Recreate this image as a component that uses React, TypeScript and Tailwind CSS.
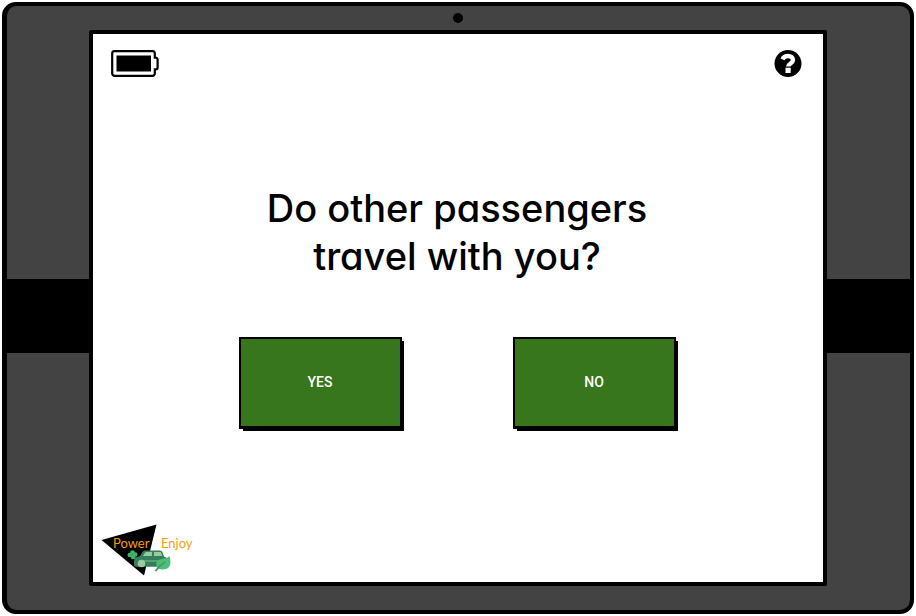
import React from "react";

function BatteryIcon() {
  return (
    <svg width="48" height="27" viewBox="0 0 48 27" role="img" aria-label="Battery full">
      <path
        d="M3.5 1.2h38a2.3 2.3 0 0 1 2.3 2.3v4.2h1a1.8 1.8 0 0 1 1.8 1.8v8a1.8 1.8 0 0 1-1.8 1.8h-1v4.2a2.3 2.3 0 0 1-2.3 2.3h-38a2.3 2.3 0 0 1-2.3-2.3v-20a2.3 2.3 0 0 1 2.3-2.3Z"
        fill="white"
        stroke="black"
        strokeWidth="2.2"
      />
      <path d="M5.500 5.500H40V21.500H5.500Z" fill="black" />
    </svg>
  );
}

function HelpIcon() {
  return (
    <svg width="28" height="28" viewBox="0 0 28 28" aria-hidden="true">
      <circle cx="14" cy="13.5" r="13.5" fill="black" />
      <path
        d="M8.500 9.300C9.500 7 11.200 6 14 6c2.800 0 5 1.600 5 4 0 3.200-4.800 3.600-4.800 6.500"
        fill="none"
        stroke="white"
        strokeWidth="4.400"
      />
      <path d="M11.500 17.700h5.200V23h-5.200Z" fill="white" />
    </svg>
  );
}

function Logo() {
  return (
    <svg width="94" height="52" viewBox="0 0 94 52" role="img" aria-label="Power Enjoy">
      <path d="M.5 16 55.500.5 43 51.500Z" fill="black" />
      <g fontSize="13" className="fill-[#f59e0b] font-['Lato',sans-serif]">
        <text x="12" y="24">Power</text>
        <text x="60" y="24">Enjoy</text>
      </g>
      <g fill="#3fb56c">
        <circle cx="31.500" cy="28.500" r="2.300" />
        <circle cx="28.800" cy="31" r="2.300" />
        <circle cx="34.200" cy="30.500" r="2.300" />
        <circle cx="32" cy="33" r="2.300" />
        <path d="M32 31l4.500 4.500-1 1-4.500-4Z" />
      </g>
      <path
        d="M33 40.500V37q0-3.500 4-4.200l2-.8 2.500-4q.8-1.500 2.500-1.500h15q2 0 2.400 1.500l1.600 4.500q4 1 4 5v5.200H35q-2 0-2-2.200Z"
        fill="#357f5e"
      />
      <path d="M42 32l2-3.200q.4-.8 1.500-.8H51v4Zm11-4h6q1 0 1.200.8l1 3.200H53Z" fill="#9acb9f" />
      <path d="M43 36h17v2H43Z" fill="#57a373" />
      <circle cx="40.500" cy="39.500" r="3.800" fill="#9acb9f" />
      <path d="M57.500 45c-4-5-2-9 3-10 4-1 6-1 8-3 2.500 9 .5 15-11 13Z" fill="#4cbf76" />
      <path d="M54.500 47Q58 42 64 38" stroke="#3f9d68" strokeWidth="1.800" fill="none" />
    </svg>
  );
}

function SidePanel({ className }: { className: string }) {
  return (
    <div className={`flex shrink-0 flex-col justify-center pt-4 ${className}`}>
      <div className="h-[74px] bg-black" />
    </div>
  );
}

function AnswerButton({ children }: { children: React.ReactNode }) {
  return (
    <button
      type="button"
      className="h-[92px] w-[163px] border-2 border-b-3 border-black bg-[#38761d] font-['Roboto',sans-serif] text-sm font-medium text-white shadow-[3px_3px_0_-1px_#000]"
    >
      {children}
    </button>
  );
}

export default function App() {
  return (
    <div className="flex min-h-screen bg-white p-0.5">
      <div className="flex grow flex-col rounded-[14px] border-4 border-l-5 border-black bg-[#434343]">
        <div className="flex h-6 items-center justify-center pr-0.5">
          <div className="size-[10px] rounded-full bg-black" />
        </div>
        <div className="flex grow">
          <SidePanel className="w-[82px]" />
          <main className="flex grow flex-col rounded-xs border-4 border-black bg-white">
            <header className="flex items-start justify-between pt-4 pr-[21px] pl-[18px]">
              <BatteryIcon />
              <button type="button" aria-label="Help">
                <HelpIcon />
              </button>
            </header>
            <section className="flex grow flex-col items-center justify-center pt-2.5 pr-0.5">
              <h1 className="text-center font-['Inter',sans-serif] text-[38px] leading-[48px] font-medium text-black [font-feature-settings:'cv11']">
                Do other passengers
                <br />
                travel with you?
              </h1>
              <div className="mt-[57px] flex gap-[111px]">
                <AnswerButton>YES</AnswerButton>
                <AnswerButton>NO</AnswerButton>
              </div>
            </section>
            <footer className="pb-1.5 pl-2">
              <Logo />
            </footer>
          </main>
          <SidePanel className="w-[83px]" />
        </div>
        <div className="h-6" />
      </div>
    </div>
  );
}
